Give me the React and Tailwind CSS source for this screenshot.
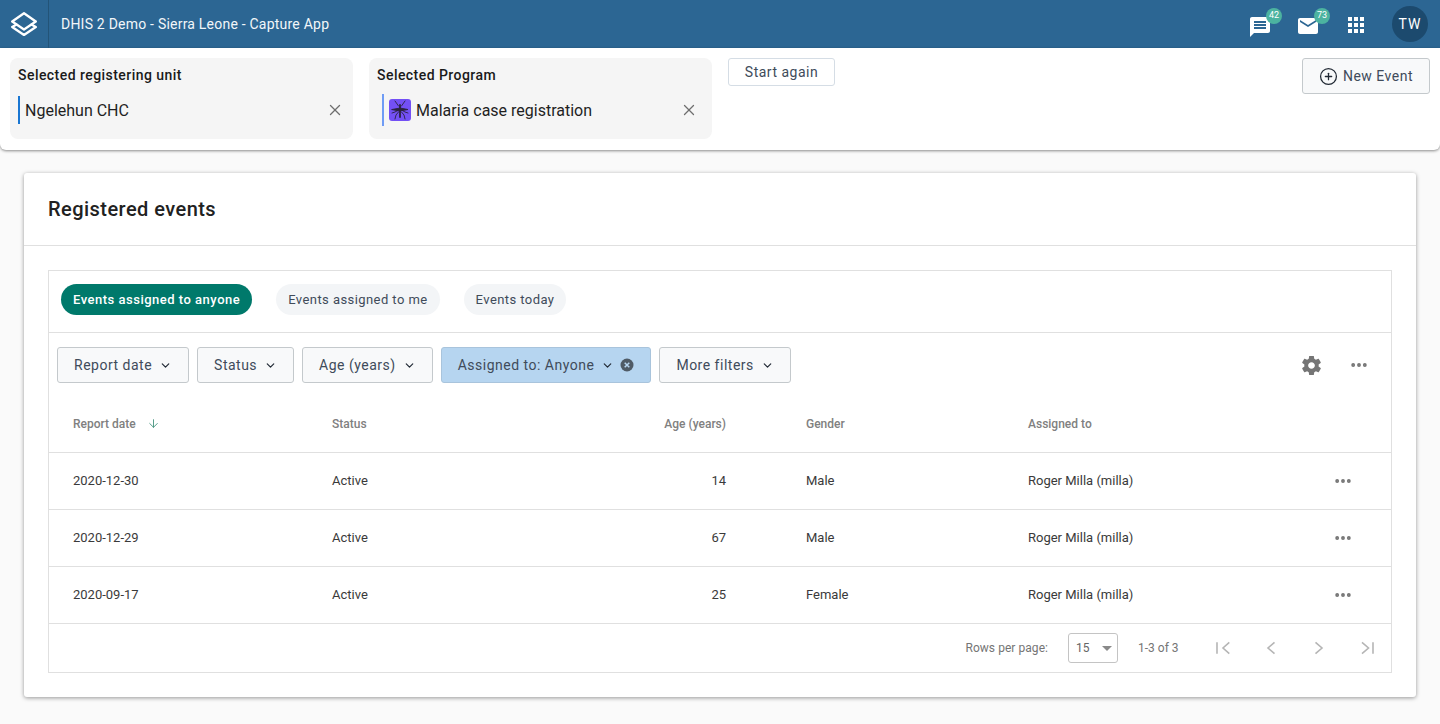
import { ChevronDown, X, ArrowDown, CirclePlus, Ellipsis } from 'lucide-react';

const FILTERS = ['Report date', 'Status', 'Age (years)'];
const ROWS = [
  { date: '2020-12-30', status: 'Active', age: 14, gender: 'Male', assigned: 'Roger Milla (milla)' },
  { date: '2020-12-29', status: 'Active', age: 67, gender: 'Male', assigned: 'Roger Milla (milla)' },
  { date: '2020-09-17', status: 'Active', age: 25, gender: 'Female', assigned: 'Roger Milla (milla)' },
];

function Logo() {
  return (
    <svg width="26" height="24" viewBox="0 0 26 24" fill="none" stroke="white" strokeWidth="2.300" strokeLinejoin="round" strokeLinecap="round">
      <path d="M13 1.200 L24.800 9.500 L13 17.500 L1.200 9.500 Z" />
      <path d="M5.500 12.500 L1.200 15 L13 23 L24.800 15 L20.500 12.500" />
    </svg>
  );
}

function Mosquito() {
  return (
    <span className="w-[22px] h-[22px] rounded-[3px] bg-[#7350f5] flex items-center justify-center">
      <svg width="22" height="22" viewBox="0 0 22 22" fill="none" stroke="#2b2340" strokeWidth="0.900" strokeLinecap="round">
        <path d="M11 6v12" strokeWidth="1.800" />
        <path d="M3 10.500 L11 9 L19 10.500 L11 12 Z" fill="#2b2340" />
        <path d="M9.500 7 L6 2 M12.500 7 L16 2 M9.500 13 L7 16 L6 20 M12.500 13 L15 16 L16 20 M9.500 11 L6 13 L3 14 M12.500 11 L16 13 L19 14" />
      </svg>
    </span>
  );
}

function Badge({ n, className }) {
  return (
    <span className={`absolute -right-3 w-4 h-4 rounded-full bg-[#4cb3a0] text-white text-[9px] flex items-center justify-center ${className}`}>
      {n}
    </span>
  );
}

function Selector({ title, width, children }) {
  return (
    <div className={`${width} h-[81px] rounded-lg bg-[#f5f5f5] px-2 pt-[7px]`}>
      <div className="text-sm font-medium leading-5 tracking-[0.45px] text-[#1a1a1a]">{title}</div>
      {children}
    </div>
  );
}

function FilterButton({ label }) {
  return (
    <button className="h-9 px-4 rounded-[3px] border border-[#c4c9cc] bg-[#f8f9fa] flex items-center gap-[7px] text-sm tracking-[0.5px] text-[#404b5a]">
      {label}
      <ChevronDown size={13} strokeWidth={2.2} className="text-[#212934]" />
    </button>
  );
}

function Chip({ label, active }) {
  return (
    <button className={`h-[31px] px-3 rounded-full text-[13px] ${active ? 'bg-[#00796b] text-white font-medium tracking-[0.5px]' : 'bg-[#f3f5f7] text-[#404b5a] tracking-[0.43px]'}`}>
      {label}
    </button>
  );
}

function Pager({ d, bar }) {
  return (
    <span className="w-12 flex justify-center">
      <svg width="24" height="24" viewBox="0 0 24 24" fill="none" stroke="#b5b5b5" strokeWidth="1.600">
        <path d={d} />
        {bar && <path d={bar} />}
      </svg>
    </span>
  );
}

export default function App() {
  return (
    <div className="min-h-[724px] bg-[#fafafa] font-['Roboto',sans-serif]">
      <header className="h-12 bg-[#2c6693] flex items-center text-white">
        <div className="w-[49px] h-12 border-r border-[#235478] flex items-center justify-center">
          <Logo />
        </div>
        <div className="ml-3 text-sm tracking-[0.22px] text-[#f2f6f9]">DHIS 2 Demo - Sierra Leone - Capture App</div>
        <div className="ml-auto flex items-center">
          <span className="relative w-5 h-5 mr-[28px] mt-[6px]">
            <svg width="20" height="20" viewBox="2 2 20 20" fill="white" className="block">
              <path d="M20 2H4c-1.100 0-2 .9-2 2v18l4-4h14c1.100 0 2-.9 2-2V4c0-1.100-.9-2-2-2zM6 9h12v2H6V9zm12 5H6v-2h12v2zm0-6H6V6h12v2z" />
            </svg>
            <Badge n="42" className="-top-[9px]" />
          </span>
          <span className="relative w-5 h-4 mr-[30px] mt-1">
            <svg width="20" height="16" viewBox="2 4 20 16" fill="white" className="block">
              <path d="M20 4H4c-1.100 0-2 .9-2 2v12c0 1.100.9 2 2 2h16c1.100 0 2-.9 2-2V6c0-1.100-.9-2-2-2zm0 4l-8 5-8-5V6l8 5 8-5v2z" />
            </svg>
            <Badge n="73" className="-top-[10px]" />
          </span>
          <span className="w-4 h-4 grid grid-cols-3 gap-[2px] mr-[28px] mt-[2px]">
            {Array.from({ length: 9 }).map((_, i) => <span key={i} className="bg-white" />)}
          </span>
          <span className="w-9 h-9 mr-3 rounded-full bg-[#1c4a6e] flex items-center justify-center text-sm tracking-[1px]">TW</span>
        </div>
      </header>

      <div className="h-[102px] bg-white shadow-[0_1px_3px_rgba(0,0,0,0.45)] rounded-b-md flex items-start pt-[10px] px-[10px]">
        <Selector title="Selected registering unit" width="w-[343px]">
          <div className="mt-[11px] h-7 flex items-center border-l-2 border-[#1976d2] pl-[5px] text-base text-[#1f1f1f]">
            <span className="mt-[2px]">Ngelehun CHC</span>
            <X size={18} strokeWidth={1.7} className="ml-auto mr-[1px] text-[#6e6e6e]" />
          </div>
        </Selector>
        <Selector title="Selected Program" width="ml-4 w-[343px]">
          <div className="mt-[9px] ml-[5px] h-8 flex items-center border-l-2 border-[#6f9cf5] pl-[5px] gap-[5px] text-base text-[#1f1f1f]">
            <Mosquito />
            <span className="mt-[2px]">Malaria case registration</span>
            <X size={18} strokeWidth={1.7} className="ml-auto mr-[6px] text-[#6e6e6e]" />
          </div>
        </Selector>
        <button className="ml-4 w-[107px] h-7 rounded-[3px] border border-[#d5dde5] bg-white text-sm tracking-[0.5px] text-[#404b5a]">Start again</button>
        <button className="ml-auto w-[128px] h-9 rounded-[3px] border border-[#c4c9cc] bg-[#f8f9fa] flex items-center justify-center gap-[5px] text-sm tracking-[0.5px] text-[#404b5a]">
          <CirclePlus size={19} strokeWidth={1.6} className="text-[#212934]" />
          New Event
        </button>
      </div>

      <main className="mx-6 mt-[23px] h-[524px] bg-white rounded-[3px] shadow-[0_1px_4px_rgba(0,0,0,0.4)]">
        <h1 className="h-[73px] px-6 flex items-center border-b border-[#e0e0e0] text-xl font-medium tracking-[0.45px] text-[#212121]">Registered events</h1>
        <div className="mx-6 mt-6 border border-[#e0e0e0]">
          <div className="h-[62px] px-3 pb-1 flex items-center gap-6 border-b border-[#e0e0e0]">
            <Chip label="Events assigned to anyone" active />
            <Chip label="Events assigned to me" />
            <Chip label="Events today" />
          </div>
          <div className="h-[64px] pl-2 flex items-center gap-2">
            {FILTERS.map(f => <FilterButton key={f} label={f} />)}
            <button className="h-9 pl-4 pr-4 rounded-[3px] border border-[#a9c4dc] bg-[#b6d5f0] flex items-center gap-[6px] text-sm tracking-[0.5px] text-[#404b5a]">
              Assigned to: Anyone
              <ChevronDown size={13} strokeWidth={2.2} className="ml-[1px] text-[#212934]" />
              <svg width="14" height="14" viewBox="0 0 14 14">
                <circle cx="7" cy="7" r="6.500" fill="#4f5b66" />
                <path d="M4.700 4.700l4.600 4.600M9.300 4.700l-4.600 4.600" stroke="#b6d5f0" strokeWidth="1.500" />
              </svg>
            </button>
            <FilterButton label="More filters" />
            <svg width="23" height="23" viewBox="0 0 24 24" fill="#757575" className="ml-auto">
              <path d="M19.430 12.980c.04-.32.07-.640.07-.980s-.03-.660-.07-.980l2.110-1.650c.19-.150.240-.420.120-.640l-2-3.460c-.120-.220-.390-.300-.610-.220l-2.490 1c-.520-.400-1.080-.730-1.690-.980l-.380-2.650C14.460 2.180 14.250 2 14 2h-4c-.250 0-.460.180-.490.420l-.380 2.650c-.610.250-1.170.590-1.690.980l-2.490-1c-.230-.090-.490 0-.610.220l-2 3.460c-.130.220-.070.490.120.640l2.110 1.650c-.040.320-.070.650-.070.980s.03.660.07.980l-2.110 1.650c-.190.150-.240.420-.120.640l2 3.460c.120.220.390.300.610.220l2.490-1c.520.400 1.080.730 1.690.980l.380 2.650c.030.240.240.420.490.420h4c.250 0 .460-.180.490-.420l.380-2.650c.610-.250 1.170-.590 1.690-.980l2.490 1c.230.090.490 0 .610-.220l2-3.460c.120-.220.070-.490-.120-.640l-2.110-1.650zM12 15.500c-1.930 0-3.500-1.570-3.500-3.500s1.570-3.500 3.500-3.500 3.500 1.570 3.500 3.500-1.570 3.500-3.500 3.500z" />
            </svg>
            <Ellipsis size={20} strokeWidth={2.600} className="ml-[18px] mr-[22px] text-[#757575]" />
          </div>

          <table className="w-full table-fixed text-[13px] text-[#3a3a3a]">
            <colgroup>
              <col className="w-[283px]" />
              <col className="w-[268px]" />
              <col className="w-[126px]" />
              <col className="w-[302px]" />
              <col />
              <col className="w-[98px]" />
            </colgroup>
            <thead>
              <tr className="h-[55px] text-xs text-[#808080] text-left">
                <th className="pl-6 font-medium">
                  <span className="inline-flex items-center gap-[11px]">Report date <ArrowDown size={13} strokeWidth={1.6} className="-mt-[2px] text-[#3c8f78]" /></span>
                </th>
                <th className="font-medium">Status</th>
                <th className="font-medium text-right">Age (years)</th>
                <th className="font-medium pl-[80px]">Gender</th>
                <th className="font-medium">Assigned to</th>
                <th />
              </tr>
            </thead>
            <tbody>
              {ROWS.map(r => (
                <tr key={r.date} className="h-[57px] border-t border-[#e0e0e0]">
                  <td className="pl-6">{r.date}</td>
                  <td>{r.status}</td>
                  <td className="text-right">{r.age}</td>
                  <td className="pl-[80px]">{r.gender}</td>
                  <td>{r.assigned}</td>
                  <td><Ellipsis size={20} strokeWidth={2.600} className="ml-10 text-[#757575]" /></td>
                </tr>
              ))}
            </tbody>
          </table>

          <div className="h-[49px] border-t border-[#e0e0e0] flex items-center justify-end text-xs text-[#757575]">
            <span className="tracking-[0.05px]">Rows per page:</span>
            <span className="ml-[20px] w-[50px] h-[30px] rounded-[3px] border border-[#c4c4c4] flex items-center pl-[7px] text-[#666]">
              15
              <span className="ml-3 w-0 h-0 border-x-[5px] border-x-transparent border-t-[5px] border-t-[#8a8a8a]" />
            </span>
            <span className="ml-5 w-[61px]">1-3 of 3</span>
            <Pager d="M18.300 6.300 L12 12 L18.300 17.700" bar="M6 6.300 V17.700" />
            <Pager d="M15.500 6.300 L9 12 L15.500 17.700" />
            <Pager d="M8.500 6.300 L15 12 L8.500 17.700" />
            <Pager d="M7 6.300 L13.500 12 L7 17.700" bar="M18 6.300 V17.700" />
          </div>
        </div>
      </main>
    </div>
  );
}
